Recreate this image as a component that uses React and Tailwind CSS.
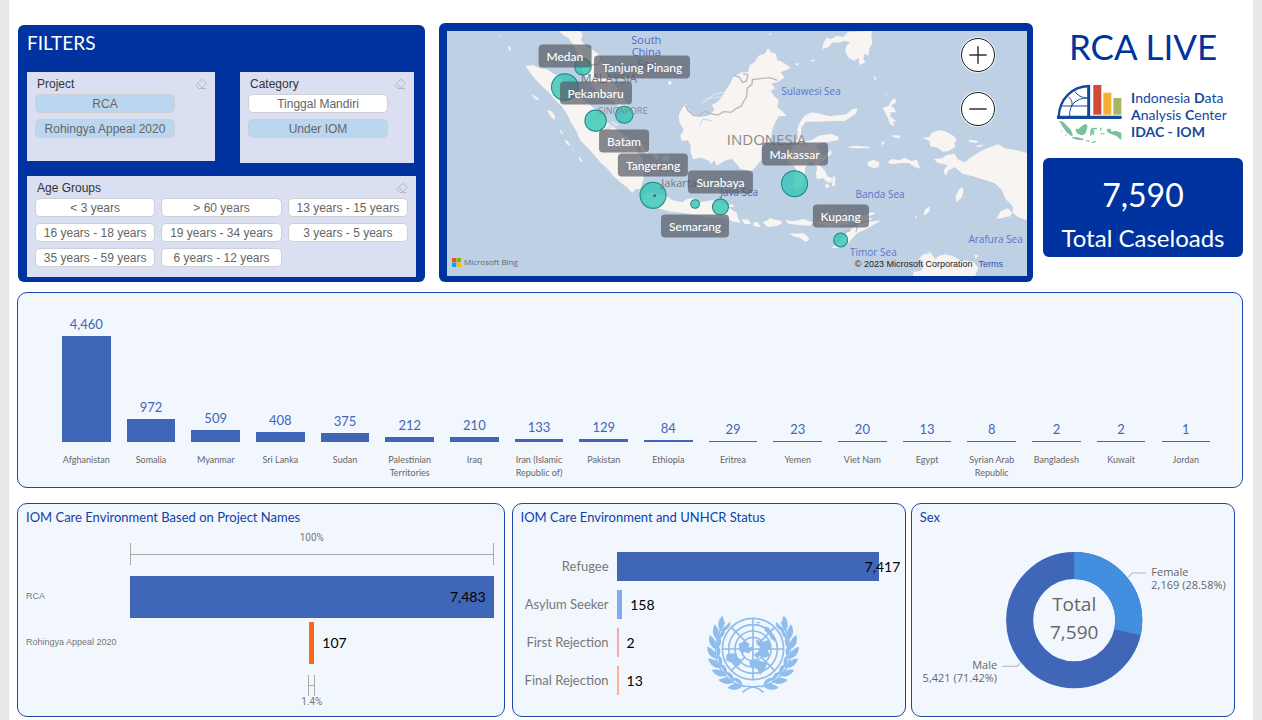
import React, { useState } from "react";
import { Eraser, Minus, Plus } from "lucide-react";

const projects = ["RCA", "Rohingya Appeal 2020"];
const categories = ["Tinggal Mandiri", "Under IOM"];
const ageGroups = [
  "< 3 years",
  "> 60 years",
  "13 years - 15 years",
  "16 years - 18 years",
  "19 years - 34 years",
  "3 years - 5 years",
  "35 years - 59 years",
  "6 years - 12 years",
];

const countries = [
  ["Afghanistan", 4460],
  ["Somalia", 972],
  ["Myanmar", 509],
  ["Sri Lanka", 408],
  ["Sudan", 375],
  ["Palestinian Territories", 212],
  ["Iraq", 210],
  ["Iran (Islamic Republic of)", 133],
  ["Pakistan", 129],
  ["Ethiopia", 84],
  ["Eritrea", 29],
  ["Yemen", 23],
  ["Viet Nam", 20],
  ["Egypt", 13],
  ["Syrian Arab Republic", 8],
  ["Bangladesh", 2],
  ["Kuwait", 2],
  ["Jordan", 1],
];

const statuses = [
  { name: "Refugee", value: 7417, color: "bg-[#4066b7]", gap: "-ml-3.5" },
  { name: "Asylum Seeker", value: 158, color: "bg-[#82abec]", gap: "ml-2" },
  { name: "First Rejection", value: 2, color: "bg-[#efa9b0]", gap: "ml-2" },
  { name: "Final Rejection", value: 13, color: "bg-[#fbb48f]", gap: "ml-2" },
];

// Map units: the view box is MAP.w x MAP.h, starting at MAP.x, MAP.y
const MAP = { x: 33, y: 48, w: 1737, h: 735 };

const bubbles = [
  [440, 155, 25],
  [386, 216, 40],
  [478, 317, 32],
  [564, 299, 26],
  [650, 541, 39],
  [776, 567, 13],
  [852, 576, 24],
  [1074, 506, 39],
  [1212, 675, 21],
];

const cities = [
  ["Medan", 386, 124],
  ["Tanjung Pinang", 618, 156],
  ["Pekanbaru", 478, 235],
  ["Batam", 563, 377],
  ["Tangerang", 650, 451],
  ["Surabaya", 852, 501],
  ["Semarang", 776, 632],
  ["Makassar", 1074, 416],
  ["Kupang", 1212, 602],
];

const places = [
  ["South", 630, 76, "text-[11px] text-[#5569c4]"],
  ["China", 630, 111, "text-[11px] text-[#5569c4]"],
  ["Sea", 630, 146, "text-[11px] text-[#5569c4]"],
  ["MALAYSIA", 518, 193, "text-xs text-[#777777]"],
  ["SINGAPORE", 560, 287, "text-[9px] text-[#8a8a8a]"],
  ["INDONESIA", 990, 373, "text-[15px] text-[#8a8a8a]"],
  ["Jakarta", 728, 505, "text-[11px] text-[#777777]"],
  ["Java Sea", 908, 531, "text-[10px] text-[#4a60c0]"],
  ["Sulawesi Sea", 1123, 228, "text-[10px] text-[#5c74c9]"],
  ["Banda Sea", 1330, 537, "text-[10px] text-[#5c74c9]"],
  ["Arafura Sea", 1676, 671, "text-[10px] text-[#5c74c9]"],
  ["Timor Sea", 1310, 712, "text-[10px] text-[#5c74c9]"],
];

const mapPoint = (x, y) => ({
  left: `${((x - MAP.x) / MAP.w) * 100}%`,
  top: `${((y - MAP.y) / MAP.h) * 100}%`,
});

function Slicer({ title, options, initial, className, grid }) {
  const [selected, setSelected] = useState(initial);
  const toggle = (name) =>
    setSelected(
      selected.includes(name)
        ? selected.filter((item) => item !== name)
        : [...selected, name]
    );

  return (
    <section
      className={`bg-[#dae0f2] px-2 pt-[5px] font-['Liberation_Sans',sans-serif] text-xs ${className}`}
    >
      <div className="flex items-center justify-between pl-0.5 leading-[14px]">
        <h3 className="text-[#333333]">{title}</h3>
        <button
          type="button"
          aria-label={`Clear ${title}`}
          onClick={() => setSelected([])}
        >
          <Eraser className="h-3 w-3 text-[#b9b9bd]" strokeWidth={2} />
        </button>
      </div>
      <div className={`mt-[3px] grid gap-y-1.5 ${grid}`}>
        {options.map((name) => (
          <button
            key={name}
            type="button"
            aria-pressed={selected.includes(name)}
            onClick={() => toggle(name)}
            className={`h-[19px] rounded-[5px] border border-[#d0d0d4] leading-4 whitespace-nowrap text-[#666666] ${
              selected.includes(name) ? "bg-[#bbd7ef]" : "bg-white"
            }`}
          >
            {name}
          </button>
        ))}
      </div>
    </section>
  );
}

function MapLand() {
  return (
    <svg
      className="block h-full w-full"
      viewBox="33 48 1737 735"
      preserveAspectRatio="none"
      aria-hidden="true"
    >
      <g fill="#f7f4f2">
        {/* Sumatra and the islands along its west coast */}
        <path d="M268 152 L290 150 L312 160 L332 163 L352 176 L372 184 L392 206 L412 222 L432 250 L452 262 L478 284 L500 296 L508 318 L530 334 L552 352 L574 366 L592 378 L602 392 L606 416 L618 430 L622 462 L622 492 L612 522 L598 522 L588 534 L574 518 L552 502 L534 486 L514 462 L494 444 L476 422 L452 396 L432 376 L420 348 L404 322 L392 296 L376 274 L356 254 L340 234 L320 216 L300 196 L284 176 Z" />
        <path d="M284 238 L296 242 L310 254 L300 254 Z M332 284 L348 290 L357 304 L354 316 L342 302 Z M370 342 L378 350 L380 360 L373 352 Z M384 374 L394 378 L403 392 L394 390 Z M408 400 L415 410 L410 408 Z M424 424 L432 428 L441 442 L432 438 Z M216 92 L222 94 L224 108 L218 106 Z M192 60 L196 64 L193 68 Z" />
        <path d="M606 386 L620 388 L624 402 L636 410 L632 418 L618 412 Z M650 414 L668 420 L666 436 L654 430 Z M674 424 L698 422 L696 440 L682 436 Z M482 300 L500 304 L496 312 Z M526 318 L548 330 L536 332 Z" />
        {/* Malay peninsula */}
        <path d="M368 48 L432 48 L440 58 L434 76 L446 90 L466 102 L486 116 L494 138 L500 162 L516 184 L534 206 L552 232 L566 254 L577 274 L562 284 L540 268 L514 250 L492 240 L474 218 L456 196 L440 172 L432 146 L424 118 L412 90 L396 68 L384 62 Z" />
        <path d="M694 200 L704 198 L706 206 L698 210 Z" />
        {/* Java */}
        <path d="M622 540 L636 530 L660 534 L690 543 L708 556 L738 562 L752 552 L772 550 L792 562 L826 556 L852 560 L870 574 L896 590 L906 612 L912 624 L888 618 L862 608 L826 606 L788 602 L744 594 L702 590 L664 580 L634 570 L618 556 Z" />
        <path d="M862 570 L890 568 L892 576 L866 576 Z" />
        {/* Borneo */}
        <path d="M748 267 L737 280 L727 300 L729 322 L742 344 L732 362 L736 378 L754 376 L763 392 L762 410 L770 432 L794 428 L818 437 L824 446 L834 436 L840 452 L868 436 L886 432 L900 446 L912 462 L930 466 L942 472 L962 450 L974 434 L974 402 L992 386 L1002 374 L1007 345 L1014 326 L1026 304 L1051 303 L1036 288 L1022 276 L1026 256 L1012 242 L1002 228 L1016 220 L1004 206 L1022 202 L1044 188 L1032 172 L1062 160 L1048 148 L1036 140 L1022 136 L1018 116 L1004 112 L994 100 L984 116 L966 122 L954 142 L940 150 L934 172 L916 172 L900 180 L890 186 L882 204 L868 226 L858 244 L842 262 L826 270 L834 284 L816 302 L790 306 L772 300 L760 288 Z" />
        {/* Mindanao */}
        <path d="M1157 102 L1160 84 L1170 68 L1184 72 L1200 62 L1220 66 L1234 50 L1306 48 L1304 66 L1307 86 L1298 100 L1296 122 L1284 116 L1280 130 L1286 142 L1268 150 L1266 128 L1252 138 L1236 128 L1226 112 L1228 94 L1240 82 L1222 78 L1204 84 L1188 82 L1176 96 Z M1120 136 L1136 134 L1130 140 Z M1074 146 L1088 144 L1082 152 Z M996 60 L1006 50 L1002 60 Z" />
        {/* Sulawesi */}
        <path d="M1090 322 L1104 302 L1124 292 L1150 296 L1180 304 L1210 300 L1230 298 L1246 282 L1263 280 L1258 296 L1240 308 L1224 318 L1190 318 L1150 320 L1108 320 L1094 338 L1092 362 L1104 378 L1124 376 L1146 362 L1184 356 L1206 366 L1204 376 L1180 380 L1150 384 L1138 394 L1150 408 L1160 424 L1184 404 L1184 418 L1162 434 L1146 448 L1164 466 L1172 484 L1186 490 L1184 504 L1170 500 L1160 490 L1140 492 L1138 474 L1142 458 L1128 440 L1116 444 L1106 458 L1104 488 L1098 514 L1080 524 L1070 518 L1072 484 L1078 462 L1068 450 L1054 440 L1056 414 L1072 392 L1084 370 L1082 342 Z M1166 510 L1174 504 L1178 516 L1168 520 Z M1188 484 L1196 486 L1194 512 L1186 514 Z" />
        {/* Moluccas */}
        <path d="M1344 292 L1338 278 L1356 272 L1364 256 L1376 250 L1378 262 L1362 272 L1372 280 L1378 292 L1362 292 L1360 304 L1378 318 L1368 322 L1374 334 L1360 328 L1352 306 Z M1236 395 L1260 392 L1296 395 L1300 400 L1264 400 L1238 398 Z M1292 442 L1310 434 L1328 442 L1326 456 L1310 460 L1294 452 Z M1352 442 L1366 432 L1388 436 L1404 428 L1424 438 L1440 434 L1446 450 L1452 462 L1434 456 L1416 444 L1390 444 L1364 448 Z M1366 360 L1392 362 L1388 370 L1368 366 Z M1334 378 L1344 384 L1336 392 Z M1310 184 L1318 188 L1316 200 Z M1348 234 L1352 240 L1346 242 Z" />
        {/* Papua */}
        <path d="M1456 368 L1478 366 L1484 354 L1506 346 L1528 350 L1552 364 L1560 376 L1552 384 L1556 396 L1534 408 L1518 410 L1502 398 L1480 394 L1478 378 Z M1490 432 L1516 430 L1530 420 L1552 416 L1562 432 L1584 442 L1600 428 L1626 412 L1650 400 L1684 388 L1704 400 L1732 404 L1771 414 L1771 616 L1742 606 L1728 594 L1726 572 L1706 552 L1694 524 L1676 506 L1646 496 L1608 484 L1576 476 L1554 456 L1536 466 L1526 482 L1520 468 L1532 450 L1504 444 Z M1678 612 L1692 588 L1712 580 L1726 592 L1720 604 L1700 608 Z M1596 374 L1626 378 L1618 384 L1596 380 Z M1610 394 L1640 388 L1632 396 Z" />
        <path d="M1558 562 L1556 544 L1566 524 L1576 516 L1580 530 L1574 548 Z M1460 600 L1464 584 L1478 574 L1478 588 L1468 598 Z M1434 602 L1442 606 L1436 610 Z" />
        {/* Lesser Sunda islands */}
        <path d="M880 590 L900 592 L906 614 L892 622 L880 614 Z M916 612 L936 614 L944 626 L924 628 Z M950 622 L964 622 L972 636 L952 634 Z M978 622 L994 616 L1000 608 L1010 612 L1034 618 L1036 626 L1018 634 L994 636 Z M1046 616 L1072 618 L1100 612 L1130 622 L1120 632 L1086 630 L1054 626 Z M1130 620 L1180 622 L1240 612 L1306 592 L1316 596 L1290 606 L1310 612 L1262 622 L1180 636 Z M1058 654 L1078 656 L1098 654 L1112 662 L1118 676 L1106 680 L1090 668 L1070 664 Z M1184 700 L1206 680 L1222 662 L1240 644 L1268 628 L1300 620 L1334 616 L1310 630 L1282 646 L1262 654 L1248 668 L1232 688 L1206 698 Z" />
        {/* Northern Australia */}
        <path d="M1428 784 L1430 770 L1452 768 L1462 750 L1444 738 L1452 724 L1464 716 L1486 718 L1494 732 L1508 722 L1526 718 L1550 724 L1572 738 L1588 736 L1612 742 L1624 760 L1614 784 Z M1470 712 L1486 712 L1480 718 Z M1612 718 L1624 722 L1616 732 Z" />
      </g>
      <g fill="none" stroke="#bbb7b8" strokeWidth="4">
        <path d="M748 270 L754 286 L772 302 L790 302 L804 288 L822 296 L844 300 L862 290 L884 292 L900 280 L914 274 L922 258 L930 246 L932 220 L946 208 L948 194 L976 190 L1000 188 L1022 196" />
        <path d="M894 182 L908 186 L918 202 L930 198 L934 180 L920 176" />
        <path d="M1226 650 L1238 648 L1240 642 M1262 634 L1258 650" />
        <path d="M446 130 L462 150 L486 148 L494 130" />
      </g>
      <g fill="none" stroke="#f7f4f2" strokeWidth="2">
        <path d="M796 266 L830 240 L868 230 M806 252 L846 246 L874 240" />
      </g>
      <g fill="none" stroke="#c9d7e6" strokeWidth="2">
        <path d="M1522 80 L1548 48 M1486 160 L1526 110" />
      </g>
      <g fill="none" stroke="#c5d5e6" strokeWidth="3">
        <path d="M500 356 L528 320 M512 346 L548 318 M790 330 L800 312 L826 318" />
      </g>
      <g fill="#2fc3b5" fillOpacity="0.78" stroke="#16877f" strokeWidth="3">
        {bubbles.map(([x, y, r]) => (
          <circle key={`${x}-${y}`} cx={x} cy={y} r={r} />
        ))}
      </g>
      <circle cx="655" cy="542" r="4" fill="#3a5f62" />
    </svg>
  );
}

function CaseloadMap() {
  return (
    <section
      aria-label="Caseload map"
      className="min-w-0 rounded-md bg-[#0033a0] pt-2 pr-1.5 pb-1.5 pl-2"
    >
      <div className="relative h-[245px] overflow-hidden bg-[#bdd0e4]">
        <MapLand />
        {places.map(([name, x, y, style]) => (
          <span
            key={name}
            style={mapPoint(x, y)}
            className={`absolute -translate-x-1/2 -translate-y-1/2 font-['Open_Sans',sans-serif] leading-3 whitespace-nowrap ${style}`}
          >
            {name}
          </span>
        ))}
        {cities.map(([name, x, y]) => (
          <span
            key={name}
            style={mapPoint(x, y)}
            className="absolute h-[23px] -translate-x-1/2 -translate-y-1/2 rounded bg-[#565a62]/70 px-2 text-xs leading-[23px] font-medium whitespace-nowrap text-white"
          >
            {name}
          </span>
        ))}
        <div className="absolute top-[7px] right-8 flex flex-col gap-5">
          <button
            type="button"
            aria-label="Zoom in"
            className="flex h-[34px] w-[34px] items-center justify-center rounded-full border border-[#1b1b1b] bg-white ring-1 ring-white/60"
          >
            <Plus className="h-7 w-7 text-[#333333]" strokeWidth={1.25} />
          </button>
          <button
            type="button"
            aria-label="Zoom out"
            className="flex h-[34px] w-[34px] items-center justify-center rounded-full border border-[#1b1b1b] bg-white ring-1 ring-white/60"
          >
            <Minus className="h-7 w-7 text-[#333333]" strokeWidth={1.25} />
          </button>
        </div>
        <div className="absolute bottom-2 left-[5px] flex items-center gap-[3px] font-['Open_Sans',sans-serif] text-[8px] leading-3 text-[#666666]">
          <svg className="h-[9px] w-[9px]" viewBox="0 0 9 9" aria-hidden="true">
            <path d="M0 0h4.3v4.3H0z" fill="#f25022" />
            <path d="M4.7 0H9v4.3H4.7z" fill="#7fba00" />
            <path d="M0 4.7h4.3V9H0z" fill="#00a4ef" />
            <path d="M4.7 4.7H9V9H4.7z" fill="#ffb900" />
          </svg>
          Microsoft Bing
        </div>
        <div className="absolute right-6 bottom-1.5 flex gap-1.5 font-['Liberation_Sans',sans-serif] text-[9px] leading-3 text-[#222222]">
          <span>© 2023 Microsoft Corporation</span>
          <a href="#terms" className="text-[#3b4fb0]">
            Terms
          </a>
        </div>
      </div>
    </section>
  );
}

function IdacLogo() {
  return (
    <svg
      className="h-[60px] w-[66px] shrink-0"
      viewBox="18 12 198 180"
      aria-hidden="true"
    >
      <g fill="none" stroke="#15489b">
        <path d="M23 110 C26 56 62 20 114 18" strokeWidth="7" />
        <path d="M113 15 V112" strokeWidth="9" />
        <path d="M18 112 H212" strokeWidth="10" />
        <path
          d="M30 78 H110 M56 108 C54 76 74 54 110 54 M72 34 C78 46 92 53 110 54 M52 50 C60 58 66 66 62 78"
          strokeWidth="3"
        />
      </g>
      <path d="M127 15h24v89h-24z" fill="#d04a37" />
      <path d="M157 38h24v66h-24z" fill="#f4b036" />
      <path d="M187 54h24v50h-24z" fill="#a7b766" />
      <g fill="#76c29a">
        <path d="M24 122 L36 125 L48 137 L60 150 L66 166 L60 168 L48 158 L36 142 Z" />
        <path d="M64 170 L80 172 L98 177 L96 181 L78 179 L65 175 Z" />
        <path d="M74 146 L84 146 L92 138 L104 131 L110 137 L107 150 L104 160 L94 166 L82 163 L75 155 Z" />
        <path d="M119 148 L124 143 L137 144 L140 141 L137 148 L124 149 L131 154 L128 158 L131 166 L126 164 L123 158 L121 168 L117 166 Z" />
        <path d="M147 142 L152 145 L150 154 L147 150 Z M148 160 L162 160 L160 163 L149 163 Z M104 181 L118 182 L116 185 L104 184 Z M122 186 L136 182 L134 186 L124 190 Z" />
        <path d="M166 147 L178 146 L182 155 L194 152 L211 158 L211 180 L203 174 L196 167 L182 163 L170 157 Z" />
        <path d="M30 150 L36 156 L32 155 Z M42 162 L48 168 L44 168 Z" />
      </g>
    </svg>
  );
}

// One laurel branch: leaf pairs along an arc, from the foot to the tip
const leaves = [16, 31, 46, 61, 76, 91, 106, 120].map((deg) => {
  const t = (deg * Math.PI) / 180;
  return {
    x: 161 - 112 * Math.sin(t),
    y: 122 + 112 * Math.cos(t),
    turn: deg + 180,
  };
});

function Laurel() {
  return (
    <g>
      <path
        d="M192 250 C178 236 160 230 134 232 C96 226 56 190 49 140 C47 108 52 76 76 40"
        fill="none"
        stroke="#8fbdec"
        strokeWidth="5"
      />
      {leaves.map(({ x, y, turn }) => (
        <g key={turn} transform={`translate(${x} ${y}) rotate(${turn})`}>
          <path d="M0 0 C6 -17 24 -24 42 -19 C34 -4 16 5 0 0 Z" />
          <path d="M0 0 C12 0 24 8 38 10 C28 22 8 18 0 0 Z" />
        </g>
      ))}
    </g>
  );
}

function UnEmblem() {
  return (
    <svg
      className="h-[80px] w-[92px]"
      viewBox="23 18 276 240"
      role="img"
      aria-label="United Nations emblem"
    >
      <g fill="#8fbdec">
        <Laurel />
        <g transform="translate(322 0) scale(-1 1)">
          <Laurel />
        </g>
      </g>
      <circle cx="161" cy="120" r="98" fill="#f2f6fd" />
      <g fill="none" stroke="#8fbdec" strokeWidth="5">
        <circle cx="161" cy="120" r="92" />
        <circle cx="161" cy="120" r="73" />
        <circle cx="161" cy="120" r="54" />
        <circle cx="161" cy="120" r="35" />
        <path d="M161 28 V212 M69 120 H253 M96 55 L136 95 M186 145 L226 185 M96 185 L136 145 M186 95 L226 55" />
      </g>
      <g fill="#8fbdec">
        <path d="M118 104 L138 96 L150 104 L148 116 L160 112 L158 124 L146 134 L138 128 L128 134 L120 124 Z" />
        <path d="M82 136 L104 132 L112 144 L126 152 L122 168 L110 174 L98 162 L80 154 Z" />
        <path d="M170 92 L192 98 L208 92 L216 112 L206 126 L212 140 L196 146 L180 142 L172 150 L164 136 L176 128 L182 114 L172 106 Z" />
        <path d="M150 158 L166 150 L184 156 L204 162 L196 182 L182 198 L174 180 L152 174 Z" />
        <path d="M196 52 L210 56 L216 72 L226 82 L228 98 L216 90 L208 74 L196 66 Z" />
        <path d="M168 40 L184 38 L178 44 Z" />
      </g>
    </svg>
  );
}

function CountryChart() {
  return (
    <section
      aria-label="Caseloads by country"
      className="mt-2.5 flex h-[196px] items-end rounded-[10px] border border-[#1c47a8] bg-[#f2f7fe] pr-6 pb-2 pl-9"
    >
      {countries.map(([name, value]) => (
        <div key={name} className="flex min-w-0 flex-1 flex-col items-center">
          <span className="mb-1 text-[13px] leading-4 text-[#4066b7]">
            {value.toLocaleString("en-US")}
          </span>
          <div
            className="min-h-px w-3/4 bg-[#4066b7]"
            style={{ height: Math.round((value / 4460) * 106) }}
          />
          <span className="mt-[11px] h-[26px] text-center text-[9px] leading-[13px] text-[#666666]">
            {name}
          </span>
        </div>
      ))}
    </section>
  );
}

function Panel({ title, className, children }) {
  return (
    <section
      className={`min-w-0 rounded-[10px] border border-[#1c47a8] bg-[#f2f7fe] pt-1 ${className}`}
    >
      <h2 className="pl-2 text-[13px] leading-[18px] text-[#0f3fa5]">{title}</h2>
      {children}
    </section>
  );
}

function ProjectFunnel() {
  return (
    <div className="pr-2.5 pl-2 text-[#777777]">
      <div className="mt-1.5 ml-[104px] text-center font-['Roboto',sans-serif] text-[10px] leading-[11px]">
        100%
      </div>
      <div className="ml-[104px] flex h-[22px] items-center border-x border-[#aaaaaa]">
        <div className="h-px flex-1 bg-[#aaaaaa]" />
      </div>
      <div className="mt-[11px] flex h-[42px] items-center">
        <span className="w-[104px] font-['Liberation_Sans',sans-serif] text-[9px]">
          RCA
        </span>
        <div className="flex h-full flex-1 items-center justify-end bg-[#4066b7] pr-2 text-sm text-black">
          7,483
        </div>
      </div>
      <div className="mt-1 flex h-[42px] items-center">
        <span className="w-[104px] font-['Liberation_Sans',sans-serif] text-[9px]">
          Rohingya Appeal 2020
        </span>
        <div className="grid h-full flex-1 grid-cols-[1fr_5px_1fr] items-center">
          <div className="col-start-2 h-full bg-[#ff671b]" />
          <span className="pl-2 text-sm text-black">107</span>
        </div>
      </div>
      <div className="mt-[11px] ml-[104px] flex flex-col items-center">
        <div className="flex h-[21px] w-[7px] items-center border-x border-[#aaaaaa]">
          <div className="h-px flex-1 bg-[#aaaaaa]" />
        </div>
        <span className="font-['Roboto',sans-serif] text-[10px] leading-3">
          1.4%
        </span>
      </div>
    </div>
  );
}

function StatusChart() {
  return (
    <div className="relative mt-[26px] flex flex-col gap-[9px] pr-[26px]">
      {statuses.map(({ name, value, color, gap }) => (
        <div key={name} className="flex h-[29px] items-center">
          <span className="mr-2 w-24 shrink-0 text-right text-[13px] text-[#777777]">
            {name}
          </span>
          <div className="flex h-full min-w-0 flex-1 items-center">
            <div
              className={`h-full min-w-0.5 shrink-0 ${color}`}
              style={{ width: `${(value / 7417) * 100}%` }}
            />
            <span className={`text-sm text-black ${gap}`}>
              {value.toLocaleString("en-US")}
            </span>
          </div>
        </div>
      ))}
      <div className="absolute right-[27%] bottom-0">
        <UnEmblem />
      </div>
    </div>
  );
}

function SexDonut() {
  return (
    <svg
      className="block w-full"
      viewBox="0 0 322 190"
      role="img"
      aria-label="Sex breakdown"
    >
      <circle
        cx="162"
        cy="94"
        r="54.5"
        fill="none"
        stroke="#4066b7"
        strokeWidth="27"
      />
      <path
        d="M162 26 A68 68 0 0 1 228.3 109.2 L202 103.2 A41 41 0 0 0 162 53 Z"
        fill="#418fde"
      />
      <g fill="none" stroke="#b5b5b5">
        <path d="M216 51 L220 47 H234" />
        <path d="M108 137 L105 140 H90" />
      </g>
      <g className="font-['Open_Sans',sans-serif] text-[11px]" fill="#666666">
        <text x="239" y="50">
          Female
        </text>
        <text x="239" y="63">
          2,169 (28.58%)
        </text>
        <text x="85" y="143" textAnchor="end">
          Male
        </text>
        <text x="85" y="156" textAnchor="end">
          5,421 (71.42%)
        </text>
      </g>
      <g
        className="font-['Open_Sans',sans-serif] text-[19px]"
        fill="#666666"
        textAnchor="middle"
      >
        <text x="162" y="85">
          Total
        </text>
        <text x="162" y="113">
          7,590
        </text>
      </g>
    </svg>
  );
}

function App() {
  return (
    <div className="min-h-screen bg-[#e9e9e9] px-[9px] font-['Lato',sans-serif]">
      <main className="min-h-screen bg-white pt-[23px] pr-2.5 pb-[3px] pl-2">
        <div className="grid grid-cols-[422fr_594fr_210fr] items-start">
          {/* Filters */}
          <section className="mt-0.5 mr-3.5 ml-px min-w-0 rounded-md bg-[#0033a0] px-[9px] pt-1 pb-[5px]">
            <h2 className="text-[19px] leading-7 text-white">FILTERS</h2>
            <div className="mt-[15px] flex items-start justify-between pr-0.5">
              <Slicer
                title="Project"
                options={projects}
                initial={projects}
                className="h-[89px] w-[188px]"
                grid="grid-cols-[140px]"
              />
              <Slicer
                title="Category"
                options={categories}
                initial={["Under IOM"]}
                className="h-[91px] w-[174px]"
                grid="grid-cols-[140px]"
              />
            </div>
            <Slicer
              title="Age Groups"
              options={ageGroups}
              initial={[]}
              className="mt-[13px] h-[101px]"
              grid="grid-cols-3 gap-x-1.5"
            />
          </section>

          <CaseloadMap />

          {/* Title, logo and total */}
          <div className="ml-2.5 min-w-0">
            <h1 className="mt-[3px] text-center text-[35px] leading-10 text-[#0033a0]">
              RCA LIVE
            </h1>
            <div className="mt-[18px] flex items-center gap-2 pl-3.5">
              <IdacLogo />
              <p className="text-sm leading-[17px] whitespace-nowrap text-[#15489b]">
                <b>I</b>ndonesia <b>D</b>ata
                <br />
                <b>A</b>nalysis <b>C</b>enter
                <br />
                <b>IDAC - IOM</b>
              </p>
            </div>
            <div className="mt-3.5 rounded-md bg-[#0033a0] pt-[17px] pb-[3px] text-center text-white">
              <p className="text-[32px] leading-10">7,590</p>
              <p className="mt-[7px] text-2xl leading-8">Total Caseloads</p>
            </div>
          </div>
        </div>

        <CountryChart />

        <div className="mt-[15px] flex h-[214px] pr-2">
          <Panel
            title="IOM Care Environment Based on Project Names"
            className="mr-[7px] flex-[488]"
          >
            <ProjectFunnel />
          </Panel>
          <Panel
            title="IOM Care Environment and UNHCR Status"
            className="mr-[5px] flex-[394]"
          >
            <StatusChart />
          </Panel>
          <Panel title="Sex" className="flex-[324]">
            <SexDonut />
          </Panel>
        </div>
      </main>
    </div>
  );
}

export default App;
